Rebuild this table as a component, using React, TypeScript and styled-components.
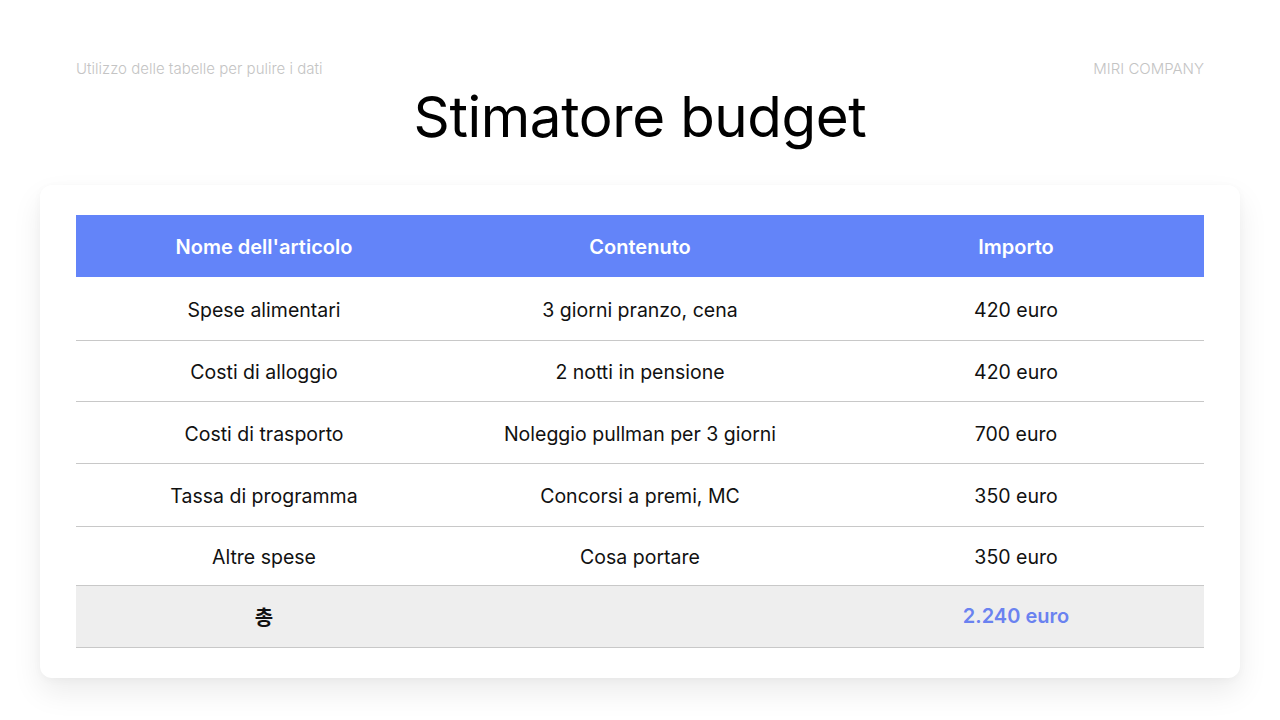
import styled, { createGlobalStyle } from 'styled-components';

const GlobalStyle = createGlobalStyle`
  html, body { margin: 0; padding: 0; background: #ffffff; }
  body { font-family: Inter, "Noto Sans", "Noto Sans CJK KR", sans-serif; color: #111; }
`;

const Page = styled.div`
  width: 1280px;
  height: 720px;
  box-sizing: border-box;
  padding-top: 58px;
  overflow: hidden;
`;

const TopBar = styled.div`
  display: flex;
  justify-content: space-between;
  align-items: center;
  padding: 0 76px;
  font-size: 15px;
  font-weight: 300;
  color: #c4c4c4;
  line-height: 21px;
`;

const Title = styled.h1`
  margin: 3px 0 0;
  text-align: center;
  font-family: Inter, "Noto Sans", sans-serif;
  font-weight: 400;
  font-size: 56.5px;
  line-height: 70px;
  letter-spacing: -0.4px;
  color: #000;
`;

const Card = styled.div`
  margin: 33px 40px 0;
  padding: 30px 36px 30px;
  background: #fff;
  border-radius: 12px;
  box-shadow: 0 14px 30px rgba(0, 0, 0, 0.08), 0 2px 8px rgba(0, 0, 0, 0.03);
`;

const Table = styled.table`
  width: 100%;
  border-collapse: collapse;
  table-layout: fixed;
  font-size: 19.5px;

  th, td {
    text-align: center;
    padding: 0;
  }
`;

const HeadCell = styled.th`
  height: 62px;
  padding-top: 2px !important;
  box-sizing: border-box;
  background: #6384f9;
  color: #fff;
  font-weight: 600;
  font-size: 20px;
`;

const Row = styled.tr<{ $total?: boolean }>`
  background: ${p => (p.$total ? '#eeeeee' : '#fff')};
  border-bottom: 1px solid #c8c8c8;
`;

const Cell = styled.td<{ $h?: number }>`
  height: ${p => p.$h || 61}px;
  padding-top: 3px !important;
  box-sizing: border-box;
  color: #111;
  font-weight: 400;
`;

const TotalLabel = styled.td`
  height: 61px;
  font-family: "Noto Sans CJK KR", sans-serif;
  font-weight: 700;
  font-size: 20px;
  color: #111;
`;

const TotalValue = styled.td`
  font-weight: 600;
  font-size: 20px;
  color: #6a82f0;
`;

const rows = [
  ['Spese alimentari', '3 giorni pranzo, cena', '420 euro', 63],
  ['Costi di alloggio', '2 notti in pensione', '420 euro', 61],
  ['Costi di trasporto', 'Noleggio pullman per 3 giorni', '700 euro', 62],
  ['Tassa di programma', 'Concorsi a premi, MC', '350 euro', 63],
  ['Altre spese', 'Cosa portare', '350 euro', 59],
] as const;

export default function App() {
  return (
    <Page>
      <GlobalStyle />
      <TopBar>
        <span>Utilizzo delle tabelle per pulire i dati</span>
        <span>MIRI COMPANY</span>
      </TopBar>
      <Title>Stimatore budget</Title>
      <Card>
        <Table>
          <thead>
            <tr>
              <HeadCell>Nome dell'articolo</HeadCell>
              <HeadCell>Contenuto</HeadCell>
              <HeadCell>Importo</HeadCell>
            </tr>
          </thead>
          <tbody>
            {rows.map(([name, content, amount, h]) => (
              <Row key={name}>
                <Cell $h={h}>{name}</Cell>
                <Cell $h={h}>{content}</Cell>
                <Cell $h={h}>{amount}</Cell>
              </Row>
            ))}
            <Row $total>
              <TotalLabel>총</TotalLabel>
              <td />
              <TotalValue>2.240 euro</TotalValue>
            </Row>
          </tbody>
        </Table>
      </Card>
    </Page>
  );
}
